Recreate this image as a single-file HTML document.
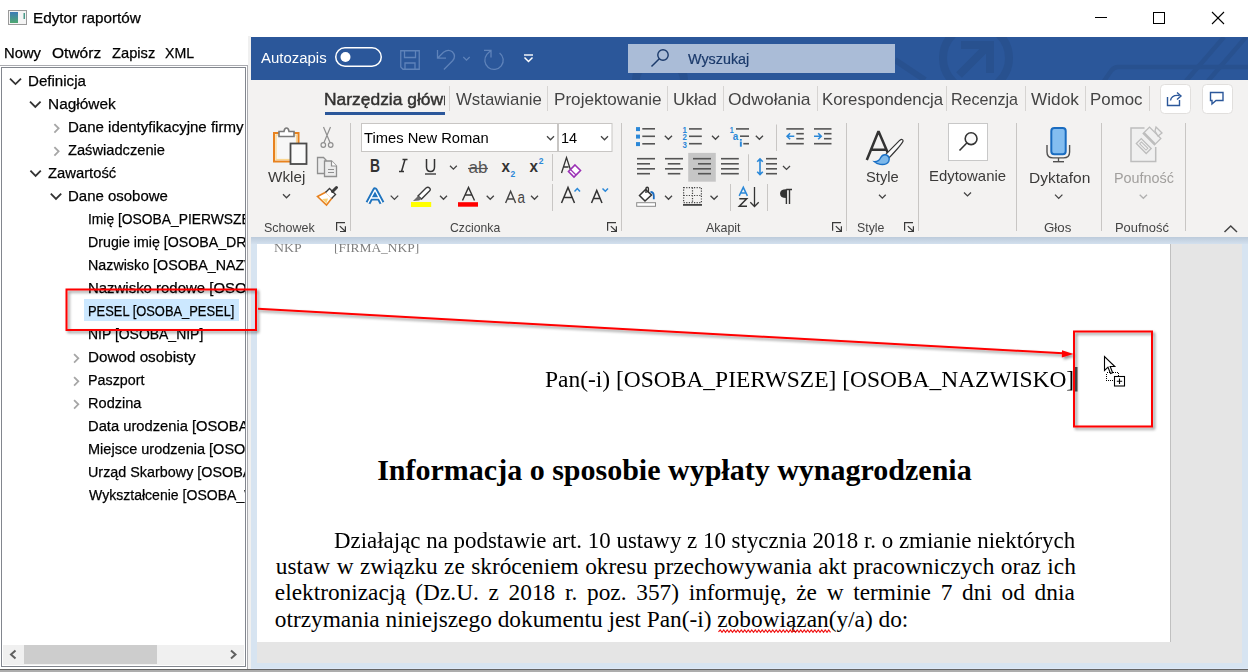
<!DOCTYPE html><html><head><meta charset='utf-8'><style>
*{margin:0;padding:0;box-sizing:border-box}
html,body{width:1248px;height:672px;overflow:hidden;background:#fff;position:relative}
.a{position:absolute}
.t{position:absolute;white-space:pre;line-height:normal}
.just{position:absolute;white-space:nowrap;text-align:justify;text-align-last:justify;font-family:"Liberation Serif",serif;font-size:23.33px;line-height:normal;color:#000}
</style></head><body>
<div class=a style='left:248px;top:36px;width:3px;height:633px;background:#f0f0f0'></div>
<div class=a style='left:251px;top:37px;width:997px;height:43px;background:#2b579a'></div>
<div class=a style='left:248px;top:80px;width:1000px;height:157px;background:#f3f2f1'></div>
<div class=a style='left:251px;top:237px;width:997px;height:432px;background:#d7e4f1'></div>
<div class=a style='left:251px;top:237px;width:997px;height:7px;background:linear-gradient(#bccbdb,#d3e0ee)'></div>
<div class=a style='left:257px;top:244px;width:985px;height:419px;background:#e5e5e5'></div>
<div class=a style='left:257px;top:244px;width:913px;height:398px;background:#fff'></div>
<div class=a style='left:1170px;top:244px;width:1px;height:398px;background:#c0c0c0'></div>
<div class=a style='left:251px;top:668px;width:997px;height:1px;background:#dde8f8'></div>
<div class=a style='left:0;top:669px;width:1248px;height:1px;background:#646464'></div>
<div class=a style='left:0;top:670px;width:1248px;height:2px;background:#adadad'></div>
<div class=a style='left:0;top:65px;width:248px;height:604px;border-top:1px solid #aaabb0;border-right:1px solid #aaabb0'></div>
<div class=a style='left:1px;top:67px;width:245px;height:600px;border:1px solid #82868e;background:#fff'></div>
<div class=a style='left:84px;top:299px;width:155px;height:22px;background:#cce8ff'></div>
<div class=a style='left:3px;top:645px;width:241px;height:20px;background:#f0f0f0'></div>
<div class=a style='left:24px;top:645px;width:133px;height:19px;background:#cdcdcd'></div>
<svg class=a style='left:0;top:0' width='1248' height='672' viewBox='0 0 1248 672'><rect x='8.5' y='10.5' width='18' height='14' fill='#f4f4f4' stroke='#9a9a9a' stroke-width='1' rx='0' /><defs><linearGradient id='gi' x1='0' y1='0' x2='0' y2='1'><stop offset='0' stop-color='#3d7bb8'/><stop offset='1' stop-color='#4ea870'/></linearGradient><linearGradient id='dg' x1='0' y1='0' x2='0' y2='1'><stop offset='0' stop-color='#bccbdb'/><stop offset='1' stop-color='#d3e0ee'/></linearGradient></defs><rect x='10' y='12' width='8' height='11' fill='url(#gi)' stroke='none' stroke-width='1' rx='0' /><rect x='23.5' y='13' width='1.5' height='6' fill='#4a9a8a' stroke='none' stroke-width='1' rx='0' /><line x1='1095' y1='17.5' x2='1107' y2='17.5' stroke='#000' stroke-width='1'/><rect x='1153.5' y='12.5' width='11' height='11' fill='none' stroke='#000' stroke-width='1' rx='0' /><line x1='1212' y1='12' x2='1224' y2='24' stroke='#000' stroke-width='1.1'/><line x1='1224' y1='12' x2='1212' y2='24' stroke='#000' stroke-width='1.1'/><clipPath id='tb'><rect x='251' y='37' width='997' height='43'/></clipPath><g clip-path='url(#tb)'><circle cx='976' cy='58' r='33' fill='none' stroke='#28518f' stroke-width='8'/><path d='M959,75 L987,47 M961,45 H990 V73' fill='none' stroke='#28518f' stroke-width='8'/><path d='M895,60 L925,80' stroke='#28518f' stroke-width='6'/><path d='M1248,67 L1118,67 Q1114,67 1111,71 L1104,81' fill='none' stroke='#28518f' stroke-width='4.5'/><path d='M1186,81 L1224,37 M1208,81 L1246,37' fill='none' stroke='#28518f' stroke-width='4.5'/><path d='M636,80 A24,20 0 0 1 684,80' fill='none' stroke='#28518f' stroke-width='8'/></g><rect x='335.75' y='47.75' width='45.5' height='18.5' fill='none' stroke='#fff' stroke-width='1.5' rx='9.25' /><circle cx='345.5' cy='57' r='5' fill='#fff'/><path d='M400.75,50.75 H419.25 V69.25 H403 L400.75,67 Z' fill='none' stroke='#5f83ba' stroke-width='1.3'/><path d='M404.5,50.75 V57.5 H415.5 V50.75 M405,69.25 V63 H415 V69.25' fill='none' stroke='#5f83ba' stroke-width='1.3'/><path d='M437.5,50 V58.2 H446 M437.5,58.2 L443.5,52.2 Q448.3,48.6 452.3,51.8 Q456.6,56.2 452.6,60.8 L443.9,69.5' fill='none' stroke='#5f83ba' stroke-width='1.3'/><path d='M463.3,57 L466.5,60.2 L469.7,57' fill='none' stroke='#5f83ba' stroke-width='1.2'/><path d='M484,50.3 H491 V57.6 M491,50.3 L486.9,54.4 A9.2,9.2 0 1 0 499.6,52.9' fill='none' stroke='#5f83ba' stroke-width='1.3'/><line x1='524' y1='55' x2='533' y2='55' stroke='#fff' stroke-width='1.4'/><path d='M524.5,57.5 L528.5,61.5 L532.5,57.5' fill='none' stroke='#fff' stroke-width='1.5'/><rect x='628' y='44' width='267' height='29' fill='#aabcd7' stroke='none' stroke-width='1' rx='0' /><circle cx='663' cy='55' r='5.2' fill='none' stroke='#1b3a6b' stroke-width='1.4'/><line x1='659.3' y1='58.7' x2='651.5' y2='66.5' stroke='#1b3a6b' stroke-width='1.5'/><rect x='325' y='112' width='120' height='3' fill='#2b579a' stroke='none' stroke-width='1' rx='0' /><line x1='449.5' y1='86' x2='449.5' y2='111' stroke='#d6d4d2' stroke-width='1'/><line x1='547.5' y1='86' x2='547.5' y2='111' stroke='#d6d4d2' stroke-width='1'/><line x1='667.5' y1='86' x2='667.5' y2='111' stroke='#d6d4d2' stroke-width='1'/><line x1='723.5' y1='86' x2='723.5' y2='111' stroke='#d6d4d2' stroke-width='1'/><line x1='817.5' y1='86' x2='817.5' y2='111' stroke='#d6d4d2' stroke-width='1'/><line x1='946.5' y1='86' x2='946.5' y2='111' stroke='#d6d4d2' stroke-width='1'/><line x1='1025.5' y1='86' x2='1025.5' y2='111' stroke='#d6d4d2' stroke-width='1'/><line x1='1085.5' y1='86' x2='1085.5' y2='111' stroke='#d6d4d2' stroke-width='1'/><line x1='1149.5' y1='86' x2='1149.5' y2='111' stroke='#d6d4d2' stroke-width='1'/><rect x='1160.5' y='84.5' width='30' height='29' fill='#fff' stroke='#e1dfdd' stroke-width='1' rx='4' /><rect x='1202.5' y='84.5' width='30' height='29' fill='#fff' stroke='#e1dfdd' stroke-width='1' rx='4' /><path d='M1167.5,97 V105.5 H1179.5 V100' fill='none' stroke='#2b579a' stroke-width='1.4'/><path d='M1170.5,100.5 Q1171.5,94.5 1179.5,95.5' fill='none' stroke='#2b579a' stroke-width='1.4'/><path d='M1177,92.5 L1181,96 L1177,99.5' fill='none' stroke='#2b579a' stroke-width='1.4'/><path d='M1210.5,92.5 H1223 V100.5 H1216 L1212,104 V100.5 H1210.5 Z' fill='none' stroke='#2b579a' stroke-width='1.4'/><line x1='350.5' y1='123' x2='350.5' y2='231' stroke='#c8c6c4' stroke-width='1'/><line x1='621.5' y1='123' x2='621.5' y2='231' stroke='#c8c6c4' stroke-width='1'/><line x1='846.5' y1='123' x2='846.5' y2='231' stroke='#c8c6c4' stroke-width='1'/><line x1='918.5' y1='123' x2='918.5' y2='231' stroke='#c8c6c4' stroke-width='1'/><line x1='1016.5' y1='123' x2='1016.5' y2='231' stroke='#c8c6c4' stroke-width='1'/><line x1='1101.5' y1='123' x2='1101.5' y2='231' stroke='#c8c6c4' stroke-width='1'/><line x1='1185.5' y1='123' x2='1185.5' y2='231' stroke='#c8c6c4' stroke-width='1'/><path d='M336.6,230.8 V222.6 H345' fill='none' stroke='#3a3a3a' stroke-width='1.2'/><path d='M339.8,226.1 L345.2,231.3 M345.4,226.3 V231.5 H340' fill='none' stroke='#3a3a3a' stroke-width='1.2'/><path d='M607.6,230.8 V222.6 H616' fill='none' stroke='#3a3a3a' stroke-width='1.2'/><path d='M610.8,226.1 L616.2,231.3 M616.4,226.3 V231.5 H611' fill='none' stroke='#3a3a3a' stroke-width='1.2'/><path d='M832.6,230.8 V222.6 H841' fill='none' stroke='#3a3a3a' stroke-width='1.2'/><path d='M835.8,226.1 L841.2,231.3 M841.4,226.3 V231.5 H836' fill='none' stroke='#3a3a3a' stroke-width='1.2'/><path d='M904.6,230.8 V222.6 H913' fill='none' stroke='#3a3a3a' stroke-width='1.2'/><path d='M907.8,226.1 L913.2,231.3 M913.4,226.3 V231.5 H908' fill='none' stroke='#3a3a3a' stroke-width='1.2'/><path d='M1224.5,232 L1230.75,226 L1237,232' fill='none' stroke='#444' stroke-width='1.5'/><rect x='274' y='133' width='24.5' height='28.5' fill='#f7f7f7' stroke='#e8821e' stroke-width='2' rx='0' /><rect x='276' y='135' width='20.5' height='24.5' fill='none' stroke='#fbd68f' stroke-width='1.2' rx='0' /><path d='M279,131.5 H284 Q284.5,128 286.5,128 Q288.5,128 289,131.5 H294 V136.5 H279 Z' fill='#fff' stroke='#7a7a7a' stroke-width='1.6'/><rect x='290.5' y='143.5' width='16' height='20.5' fill='#fafafa' stroke='#4a4a4a' stroke-width='1.8' rx='0' /><path d='M283,194.25 L286.50,197.75 L290,194.25' fill='none' stroke='#444' stroke-width='1.3'/><path d='M323.5,127 L330,142.5 M330.5,127 L324,142.5' fill='none' stroke='#8f8f8f' stroke-width='1.2'/><circle cx='323.3' cy='145' r='2.3' fill='none' stroke='#8f8f8f' stroke-width='1.2'/><circle cx='330.7' cy='145' r='2.3' fill='none' stroke='#8f8f8f' stroke-width='1.2'/><path d='M317.5,157.5 H323.5 L326,160 V173.5 H317.5 Z' fill='#ececec' stroke='#8f8f8f' stroke-width='1.3'/><path d='M324.5,161 H331.5 L336.5,166 V176.5 H324.5 Z' fill='#ececec' stroke='#8f8f8f' stroke-width='1.3'/><path d='M331.5,161 V166 H336.5' fill='#fff' stroke='#8f8f8f' stroke-width='1.2'/><line x1='328' y1='169.5' x2='334' y2='169.5' stroke='#8f8f8f' stroke-width='1'/><line x1='328' y1='172.5' x2='334' y2='172.5' stroke='#8f8f8f' stroke-width='1'/><path d='M317.5,196.5 L326,192 L332,198 L326.5,205 Z' fill='#fff' stroke='#e8821e' stroke-width='1.6'/><path d='M322,199 L328,198.5 L326.5,203.5 Z' fill='#f9d37c'/><path d='M325.5,192.5 L329.5,188.5 L335.5,194.5 L331.5,198.5' fill='#fff' stroke='#3a3a3a' stroke-width='1.4'/><path d='M332.5,191.5 L336.5,187.5' stroke='#3a3a3a' stroke-width='3' stroke-linecap='round'/><rect x='361.5' y='123.5' width='196' height='28' fill='#fff' stroke='#c8c6c4' stroke-width='1' rx='0' /><rect x='558.5' y='123.5' width='53.5' height='28' fill='#fff' stroke='#c8c6c4' stroke-width='1' rx='0' /><path d='M547,136.25 L550.50,139.75 L554,136.25' fill='none' stroke='#444' stroke-width='1.3'/><path d='M601,136.25 L604.50,139.75 L608,136.25' fill='none' stroke='#444' stroke-width='1.3'/><text x='370' y='172' font-family='Liberation Sans' font-size='17.5' font-weight='700' fill='#333' text-anchor='start' style='' textLength='10' lengthAdjust='spacingAndGlyphs'>B</text><path d='M402.5,159.5 H407.5 M399,171.5 H404 M405,159.5 L401.5,171.5' fill='none' stroke='#333' stroke-width='1.5'/><path d='M426.5,159 V167 Q426.5,171.5 430.5,171.5 Q434.5,171.5 434.5,167 V159' fill='none' stroke='#333' stroke-width='1.5'/><rect x='425' y='173.2' width='11' height='1.6' fill='#555' stroke='none' stroke-width='1' rx='0' /><path d='M450,165.80 L453.40,169.20 L456.8,165.80' fill='none' stroke='#444' stroke-width='1.3'/><text x='468.5' y='173' font-family='Liberation Sans' font-size='16' font-weight='400' fill='#555' text-anchor='start' style='' textLength='19' lengthAdjust='spacingAndGlyphs'>ab</text><line x1='468' y1='168.5' x2='488' y2='168.5' stroke='#555' stroke-width='1.2'/><text x='501.5' y='172' font-family='Liberation Sans' font-size='16.5' font-weight='700' fill='#333' text-anchor='start' style='' textLength='8.5' lengthAdjust='spacingAndGlyphs'>x</text><text x='510.5' y='177' font-family='Liberation Sans' font-size='8.5' font-weight='700' fill='#2b88d8' text-anchor='start' style='' >2</text><text x='529.5' y='172' font-family='Liberation Sans' font-size='16.5' font-weight='700' fill='#333' text-anchor='start' style='' textLength='8.5' lengthAdjust='spacingAndGlyphs'>x</text><text x='538.8' y='163.5' font-family='Liberation Sans' font-size='8.5' font-weight='700' fill='#2b88d8' text-anchor='start' style='' >2</text><line x1='552.5' y1='154' x2='552.5' y2='181' stroke='#c8c6c4' stroke-width='1'/><line x1='552.5' y1='184' x2='552.5' y2='211' stroke='#c8c6c4' stroke-width='1'/><path d='M561.5,173 L566.5,157.5 L571.5,173 M563.5,167 H568.5' fill='none' stroke='#333' stroke-width='1.3'/><path d='M575,165 L580.5,170.5 L574,177 L568.5,171.5 Z' fill='#fff' stroke='#9b30b5' stroke-width='1.6'/><path d='M570.5,169.5 L576,175' stroke='#9b30b5' stroke-width='1.2'/><path d='M368,203 L375,190 L382,203 M370.6,198 H379.4' fill='none' stroke='#1e73be' stroke-width='5.2' stroke-linejoin='round'/><path d='M368,203 L375,190 L382,203 M370.6,198 H379.4' fill='none' stroke='#ffffff' stroke-width='1.5' stroke-linejoin='round'/><path d='M390.7,195.62 L394.45,199.38 L398.2,195.62' fill='none' stroke='#444' stroke-width='1.3'/><path d='M418,196 L426,188 Q428,186.5 429.5,188 Q431,189.5 429.5,191 L421.5,199 Z' fill='#fff' stroke='#3a3a3a' stroke-width='1.4'/><path d='M418,196 L421.5,199 L419,200.5 L413,201 Z' fill='#6a6a6a'/><rect x='411' y='202' width='20.2' height='5' fill='#ffff00' stroke='none' stroke-width='1' rx='0' /><path d='M440,195.75 L443.50,199.25 L447,195.75' fill='none' stroke='#444' stroke-width='1.3'/><path d='M462.5,200.5 L468.5,187.5 L474.5,200.5 M465,195 H472' fill='none' stroke='#333' stroke-width='1.4'/><rect x='458' y='202.2' width='20' height='4.5' fill='#ff0000' stroke='none' stroke-width='1' rx='0' /><path d='M486.7,195.72 L490.25,199.28 L493.8,195.72' fill='none' stroke='#444' stroke-width='1.3'/><path d='M505.6,203 L510.6,191.2 L515.6,203 M507.3,199 H513.9' fill='none' stroke='#444' stroke-width='1.4'/><text x='517.6' y='203' font-family='Liberation Sans' font-size='16' font-weight='400' fill='#444' text-anchor='start' style='' textLength='7.5' lengthAdjust='spacingAndGlyphs'>a</text><path d='M531,195.75 L534.50,199.25 L538,195.75' fill='none' stroke='#444' stroke-width='1.3'/><path d='M561.5,203 L568,187.5 L574.5,203 M564,197.5 H572' fill='none' stroke='#333' stroke-width='1.5'/><path d='M574.5,191.5 L577.3,188.5 L580,191.5' fill='none' stroke='#2b88d8' stroke-width='1.5'/><path d='M591.5,203 L596.75,190.5 L602,203 M593.5,198.5 H600' fill='none' stroke='#333' stroke-width='1.5'/><path d='M602.5,188.5 L605.3,191.3 L608,188.5' fill='none' stroke='#2b88d8' stroke-width='1.5'/><rect x='636' y='127.1' width='4' height='4' fill='#2b88d8' stroke='none' stroke-width='1' rx='0' /><rect x='636' y='134.6' width='4' height='4' fill='#2b88d8' stroke='none' stroke-width='1' rx='0' /><rect x='636' y='142.1' width='4' height='4' fill='#2b88d8' stroke='none' stroke-width='1' rx='0' /><rect x='642.3' y='128.0' width='12.7' height='1.6' fill='#555' stroke='none' stroke-width='1' rx='0' /><rect x='642.3' y='135.5' width='12.7' height='1.6' fill='#555' stroke='none' stroke-width='1' rx='0' /><rect x='642.3' y='143.0' width='12.7' height='1.6' fill='#555' stroke='none' stroke-width='1' rx='0' /><path d='M664.8,135.70 L668.40,139.30 L672,135.70' fill='none' stroke='#444' stroke-width='1.3'/><text x='682.6' y='132.9' font-family='Liberation Sans' font-size='9' font-weight='700' fill='#2b88d8' text-anchor='start' style='' textLength='4.4' lengthAdjust='spacingAndGlyphs'>1</text><rect x='689' y='128.1' width='12.8' height='1.6' fill='#555' stroke='none' stroke-width='1' rx='0' /><text x='682.6' y='140.3' font-family='Liberation Sans' font-size='9' font-weight='700' fill='#2b88d8' text-anchor='start' style='' textLength='4.4' lengthAdjust='spacingAndGlyphs'>2</text><rect x='689' y='135.5' width='12.8' height='1.6' fill='#555' stroke='none' stroke-width='1' rx='0' /><text x='682.6' y='147.7' font-family='Liberation Sans' font-size='9' font-weight='700' fill='#2b88d8' text-anchor='start' style='' textLength='4.4' lengthAdjust='spacingAndGlyphs'>3</text><rect x='689' y='142.89999999999998' width='12.8' height='1.6' fill='#555' stroke='none' stroke-width='1' rx='0' /><path d='M712,135.75 L715.50,139.25 L719,135.75' fill='none' stroke='#444' stroke-width='1.3'/><text x='729.8' y='132.7' font-family='Liberation Sans' font-size='9' font-weight='700' fill='#2b88d8' text-anchor='start' style='' textLength='4' lengthAdjust='spacingAndGlyphs'>1</text><rect x='736' y='128.1' width='13' height='1.6' fill='#555' stroke='none' stroke-width='1' rx='0' /><text x='732.8' y='140.2' font-family='Liberation Sans' font-size='10' font-weight='700' fill='#2b88d8' text-anchor='start' style='' textLength='5.5' lengthAdjust='spacingAndGlyphs'>a</text><rect x='740' y='135.4' width='9' height='1.6' fill='#555' stroke='none' stroke-width='1' rx='0' /><rect x='739.9' y='141.5' width='1.9' height='5.2' fill='#2b88d8' stroke='none' stroke-width='1' rx='0' /><rect x='739.9' y='139' width='1.9' height='1.7' fill='#2b88d8' stroke='none' stroke-width='1' rx='0' /><rect x='743.3' y='142.9' width='5.7' height='1.6' fill='#555' stroke='none' stroke-width='1' rx='0' /><path d='M755.8,135.70 L759.40,139.30 L763,135.70' fill='none' stroke='#444' stroke-width='1.3'/><line x1='776.5' y1='124.5' x2='776.5' y2='151' stroke='#c8c6c4' stroke-width='1'/><rect x='786.3' y='128.1' width='17.5' height='1.6' fill='#555' stroke='none' stroke-width='1' rx='0' /><rect x='786.3' y='142.9' width='17.5' height='1.6' fill='#555' stroke='none' stroke-width='1' rx='0' /><rect x='796.3' y='132.9' width='7.5' height='1.6' fill='#555' stroke='none' stroke-width='1' rx='0' /><rect x='796.3' y='137.9' width='7.5' height='1.6' fill='#555' stroke='none' stroke-width='1' rx='0' /><path d='M794.3,136.3 H787.0999999999999 M790.0999999999999,133.3 L787.0999999999999,136.3 L790.0999999999999,139.3' fill='none' stroke='#2b88d8' stroke-width='1.6'/><rect x='814' y='128.1' width='17.5' height='1.6' fill='#555' stroke='none' stroke-width='1' rx='0' /><rect x='814' y='142.9' width='17.5' height='1.6' fill='#555' stroke='none' stroke-width='1' rx='0' /><rect x='824' y='132.9' width='7.5' height='1.6' fill='#555' stroke='none' stroke-width='1' rx='0' /><rect x='824' y='137.9' width='7.5' height='1.6' fill='#555' stroke='none' stroke-width='1' rx='0' /><path d='M814,136.3 H821.2 M818.2,133.3 L821.2,136.3 L818.2,139.3' fill='none' stroke='#2b88d8' stroke-width='1.6'/><rect x='688.2' y='152.9' width='27.6' height='28.8' fill='#c6c6c6' stroke='none' stroke-width='1' rx='0' /><rect x='637' y='157.89999999999998' width='18' height='1.6' fill='#555' stroke='none' stroke-width='1' rx='0' /><rect x='665' y='157.89999999999998' width='18' height='1.6' fill='#555' stroke='none' stroke-width='1' rx='0' /><rect x='693' y='157.89999999999998' width='18' height='1.6' fill='#555' stroke='none' stroke-width='1' rx='0' /><rect x='721' y='157.89999999999998' width='17.8' height='1.6' fill='#555' stroke='none' stroke-width='1' rx='0' /><rect x='637' y='163.0' width='13' height='1.6' fill='#555' stroke='none' stroke-width='1' rx='0' /><rect x='667.8' y='163.0' width='12.5' height='1.6' fill='#555' stroke='none' stroke-width='1' rx='0' /><rect x='698' y='163.0' width='13' height='1.6' fill='#555' stroke='none' stroke-width='1' rx='0' /><rect x='721' y='163.0' width='17.8' height='1.6' fill='#555' stroke='none' stroke-width='1' rx='0' /><rect x='637' y='168.0' width='18' height='1.6' fill='#555' stroke='none' stroke-width='1' rx='0' /><rect x='665' y='168.0' width='18' height='1.6' fill='#555' stroke='none' stroke-width='1' rx='0' /><rect x='693' y='168.0' width='18' height='1.6' fill='#555' stroke='none' stroke-width='1' rx='0' /><rect x='721' y='168.0' width='17.8' height='1.6' fill='#555' stroke='none' stroke-width='1' rx='0' /><rect x='637' y='172.89999999999998' width='13' height='1.6' fill='#555' stroke='none' stroke-width='1' rx='0' /><rect x='667.8' y='172.89999999999998' width='12.5' height='1.6' fill='#555' stroke='none' stroke-width='1' rx='0' /><rect x='698' y='172.89999999999998' width='13' height='1.6' fill='#555' stroke='none' stroke-width='1' rx='0' /><rect x='721' y='172.89999999999998' width='17.8' height='1.6' fill='#555' stroke='none' stroke-width='1' rx='0' /><line x1='748.5' y1='154.3' x2='748.5' y2='181' stroke='#c8c6c4' stroke-width='1'/><path d='M760,159 V174.5 M757.2,161.8 L760,159 L762.8,161.8 M757.2,171.7 L760,174.5 L762.8,171.7' fill='none' stroke='#2b88d8' stroke-width='1.6'/><rect x='766' y='157.89999999999998' width='11' height='1.6' fill='#555' stroke='none' stroke-width='1' rx='0' /><rect x='766' y='163.0' width='11' height='1.6' fill='#555' stroke='none' stroke-width='1' rx='0' /><rect x='766' y='168.0' width='11' height='1.6' fill='#555' stroke='none' stroke-width='1' rx='0' /><rect x='766' y='172.89999999999998' width='11' height='1.6' fill='#555' stroke='none' stroke-width='1' rx='0' /><path d='M783,165.95 L786.50,169.45 L790,165.95' fill='none' stroke='#444' stroke-width='1.3'/><path d='M639.5,195.5 L645.5,189.5 L651.5,195 L645,201 Z' fill='#fff' stroke='#333' stroke-width='1.5'/><path d='M646,193 V188.5 Q646,187.2 647.2,187.2 Q648.4,187.2 648.4,188.5 V193' fill='none' stroke='#333' stroke-width='1.4'/><path d='M650.5,192 Q653.8,192 653.8,196 V199.3' fill='none' stroke='#1a6cc0' stroke-width='1.8'/><rect x='636.7' y='202.7' width='18.8' height='3.6' fill='#fff' stroke='#8a8a8a' stroke-width='1' rx='0' /><path d='M665,195.75 L668.50,199.25 L672,195.75' fill='none' stroke='#444' stroke-width='1.3'/><g stroke='#444' stroke-width='1.2' stroke-dasharray='1.2 1.4' fill='none'><rect x='683.6' y='187.6' width='17.8' height='15'/><line x1='692.5' y1='187.6' x2='692.5' y2='203'/><line x1='683.6' y1='195.5' x2='701.4' y2='195.5'/></g><rect x='683' y='204' width='19' height='1.8' fill='#444' stroke='none' stroke-width='1' rx='0' /><path d='M710.5,195.70 L714.10,199.30 L717.7,195.70' fill='none' stroke='#444' stroke-width='1.3'/><line x1='730.5' y1='184' x2='730.5' y2='211' stroke='#c8c6c4' stroke-width='1'/><path d='M739.2,195.8 L743.3,187.3 L747.4,195.8 M740.6,193 H746' fill='none' stroke='#2b88d8' stroke-width='1.5'/><path d='M739.3,198.7 H746.7 L739.3,206.3 H747' fill='none' stroke='#333' stroke-width='1.5'/><path d='M754.5,187 V206.5 M750.3,202.2 L754.5,206.5 L758.7,202.2' fill='none' stroke='#333' stroke-width='1.3'/><line x1='767.5' y1='184' x2='767.5' y2='211' stroke='#c8c6c4' stroke-width='1'/><path d='M786.2,189.5 H792 M786.4,189.5 V204 M789.5,189.5 V204' fill='none' stroke='#333' stroke-width='1.4'/><path d='M786.4,189.2 Q780,189.2 780,193.5 Q780,198 786.4,198 Z' fill='#333'/><path d='M866.8,160 L878.5,131.2 L888.3,154 M871.8,149.8 H886.8' fill='none' stroke='#333' stroke-width='2.5' stroke-linejoin='bevel'/><path d='M885.3,154.8 L899.6,140.4 Q902.6,138.3 903.1,140.9 Q902.9,143.3 889.3,157.6 Z' fill='#fafafa' stroke='#333' stroke-width='1.2'/><path d='M874.2,161.6 Q879,161.8 880.6,157.8 Q882.6,153.8 886.6,155 Q890.2,156.8 888.8,161.2 Q886.8,165.2 880.2,164.4 Q876.6,163.8 874.2,161.6 Z' fill='#7db8ea' stroke='#1a6fc4' stroke-width='1.4'/><path d='M879,194.82 L882.35,198.18 L885.7,194.82' fill='none' stroke='#444' stroke-width='1.3'/><rect x='948.5' y='123.5' width='39' height='37' fill='#fff' stroke='#c8c8c8' stroke-width='1' rx='0' /><circle cx='971.1' cy='138.7' r='5.9' fill='#fafafa' stroke='#333' stroke-width='1.6'/><line x1='966.8' y1='143' x2='959.5' y2='150.5' stroke='#333' stroke-width='1.6'/><path d='M964,192.45 L967.50,195.95 L971,192.45' fill='none' stroke='#444' stroke-width='1.3'/><rect x='1051.3' y='128.1' width='14.4' height='26.2' fill='#83bdf0' stroke='#1a6cc0' stroke-width='2' rx='3' /><path d='M1047,145 V152 Q1047,157.9 1053,157.9 H1063.6 Q1069.6,157.9 1069.6,152 V145' fill='none' stroke='#505050' stroke-width='1.4'/><line x1='1058.5' y1='158' x2='1058.5' y2='161.5' stroke='#505050' stroke-width='1.3'/><line x1='1053' y1='161.7' x2='1064' y2='161.7' stroke='#505050' stroke-width='1.4'/><path d='M1055,194.65 L1058.70,198.35 L1062.4,194.65' fill='none' stroke='#444' stroke-width='1.3'/><path d='M1144.5,128 H1131 V161.5 H1155.7 V147' fill='#f0f0f0' stroke='#bdbdbd' stroke-width='1.5'/><g transform='translate(1139.5,141.8) rotate(45)'><rect x='-1' y='-3.5' width='14' height='7' fill='#f0f0f0' stroke='#bdbdbd' stroke-width='1.3'/><rect x='1.5' y='-1.3' width='9' height='2.6' fill='none' stroke='#bdbdbd' stroke-width='1'/></g><g transform='translate(1152,136) rotate(45)'><rect x='-8' y='-4.5' width='16' height='9' fill='#f0f0f0' stroke='#bdbdbd' stroke-width='1.3'/><rect x='-8' y='2.5' width='16' height='2' fill='#bdbdbd'/></g><path d='M1156,127 L1162,133 L1158,136 L1155,131 Z' fill='#f0f0f0' stroke='#bdbdbd' stroke-width='1.3'/><path d='M1139.7,194.68 L1143.35,198.32 L1147,194.68' fill='none' stroke='#b0b0b0' stroke-width='1.3'/><path d='M10,78.55 L15.50,84.05 L21,78.55' fill='none' stroke='#333' stroke-width='1.8'/><path d='M30,101.65 L35.30,106.95 L40.6,101.65' fill='none' stroke='#333' stroke-width='1.8'/><path d='M30.4,170.70 L35.60,175.90 L40.8,170.70' fill='none' stroke='#333' stroke-width='1.8'/><path d='M50.8,193.70 L56.00,198.90 L61.2,193.70' fill='none' stroke='#333' stroke-width='1.8'/><path d='M54.38,124.05 L58.62,128.30 L54.38,132.55' fill='none' stroke='#a6a6a6' stroke-width='1.8'/><path d='M54.38,147.05 L58.62,151.30 L54.38,155.55' fill='none' stroke='#a6a6a6' stroke-width='1.8'/><path d='M74.08,354.05 L78.33,358.30 L74.08,362.55' fill='none' stroke='#a6a6a6' stroke-width='1.8'/><path d='M74.08,377.05 L78.33,381.30 L74.08,385.55' fill='none' stroke='#a6a6a6' stroke-width='1.8'/><path d='M74.08,400.05 L78.33,404.30 L74.08,408.55' fill='none' stroke='#a6a6a6' stroke-width='1.8'/><path d='M15.5,650.5 L11,654.5 L15.5,658.5' fill='none' stroke='#606060' stroke-width='2'/><path d='M231,650.5 L235.5,654.5 L231,658.5' fill='none' stroke='#606060' stroke-width='2'/></svg>
<div class=a style='left:0;top:0;width:245px;height:667px;overflow:hidden'><div class=t style='left:28.03px;top:71.60px;font-family:"Liberation Sans", sans-serif;font-size:15.5px;font-weight:400;color:#000;transform:scaleX(0.9746);transform-origin:0 0;-webkit-text-stroke:0.25px #000;'>Definicja</div>
<div class=t style='left:48.01px;top:94.60px;font-family:"Liberation Sans", sans-serif;font-size:15.5px;font-weight:400;color:#000;transform:scaleX(0.9940);transform-origin:0 0;-webkit-text-stroke:0.25px #000;'>Nagłówek</div>
<div class=t style='left:68.03px;top:117.60px;font-family:"Liberation Sans", sans-serif;font-size:15.5px;font-weight:400;color:#000;transform:scaleX(0.9700);transform-origin:0 0;-webkit-text-stroke:0.25px #000;'>Dane identyfikacyjne firmy</div>
<div class=t style='left:68.00px;top:140.60px;font-family:"Liberation Sans", sans-serif;font-size:15.5px;font-weight:400;color:#000;transform:scaleX(0.9461);transform-origin:0 0;-webkit-text-stroke:0.25px #000;'>Zaświadczenie</div>
<div class=t style='left:48.00px;top:163.60px;font-family:"Liberation Sans", sans-serif;font-size:15.5px;font-weight:400;color:#000;transform:scaleX(0.9549);transform-origin:0 0;-webkit-text-stroke:0.25px #000;'>Zawartość</div>
<div class=t style='left:68.03px;top:186.60px;font-family:"Liberation Sans", sans-serif;font-size:15.5px;font-weight:400;color:#000;transform:scaleX(0.9657);transform-origin:0 0;-webkit-text-stroke:0.25px #000;'>Dane osobowe</div>
<div class=t style='left:87.86px;top:209.60px;font-family:"Liberation Sans", sans-serif;font-size:15.5px;font-weight:400;color:#000;transform:scaleX(0.8927);transform-origin:0 0;-webkit-text-stroke:0.25px #000;'>Imię [OSOBA_PIERWSZE]</div>
<div class=t style='left:87.83px;top:232.60px;font-family:"Liberation Sans", sans-serif;font-size:15.5px;font-weight:400;color:#000;transform:scaleX(0.9159);transform-origin:0 0;-webkit-text-stroke:0.25px #000;'>Drugie imię [OSOBA_DRUGIE]</div>
<div class=t style='left:87.83px;top:255.60px;font-family:"Liberation Sans", sans-serif;font-size:15.5px;font-weight:400;color:#000;transform:scaleX(0.9211);transform-origin:0 0;-webkit-text-stroke:0.25px #000;'>Nazwisko [OSOBA_NAZWISKO]</div>
<div class=t style='left:87.79px;top:278.60px;font-family:"Liberation Sans", sans-serif;font-size:15.5px;font-weight:400;color:#000;transform:scaleX(0.9639);transform-origin:0 0;-webkit-text-stroke:0.25px #000;'>Nazwisko rodowe [OSOBA_NAZWISKO_RODOWE]</div>
<div class=t style='left:87.97px;top:301.60px;font-family:"Liberation Sans", sans-serif;font-size:15.5px;font-weight:400;color:#000;transform:scaleX(0.8316);transform-origin:0 0;-webkit-text-stroke:0.25px #000;'>PESEL [OSOBA_PESEL]</div>
<div class=t style='left:87.70px;top:324.60px;font-family:"Liberation Sans", sans-serif;font-size:15.5px;font-weight:400;color:#000;transform:scaleX(0.9000);transform-origin:0 0;-webkit-text-stroke:0.25px #000;'>NIP [OSOBA_NIP]</div>
<div class=t style='left:87.62px;top:347.60px;font-family:"Liberation Sans", sans-serif;font-size:15.5px;font-weight:400;color:#000;transform:scaleX(0.9826);transform-origin:0 0;-webkit-text-stroke:0.25px #000;'>Dowod osobisty</div>
<div class=t style='left:87.68px;top:370.60px;font-family:"Liberation Sans", sans-serif;font-size:15.5px;font-weight:400;color:#000;transform:scaleX(0.9233);transform-origin:0 0;-webkit-text-stroke:0.25px #000;'>Paszport</div>
<div class=t style='left:87.66px;top:393.60px;font-family:"Liberation Sans", sans-serif;font-size:15.5px;font-weight:400;color:#000;transform:scaleX(0.9402);transform-origin:0 0;-webkit-text-stroke:0.25px #000;'>Rodzina</div>
<div class=t style='left:87.65px;top:416.60px;font-family:"Liberation Sans", sans-serif;font-size:15.5px;font-weight:400;color:#000;transform:scaleX(0.9503);transform-origin:0 0;-webkit-text-stroke:0.25px #000;'>Data urodzenia [OSOBA_DATA_URODZENIA]</div>
<div class=t style='left:87.66px;top:439.60px;font-family:"Liberation Sans", sans-serif;font-size:15.5px;font-weight:400;color:#000;transform:scaleX(0.9370);transform-origin:0 0;-webkit-text-stroke:0.25px #000;'>Miejsce urodzenia [OSOBA_MIEJSCE_URODZENIA]</div>
<div class=t style='left:87.67px;top:462.60px;font-family:"Liberation Sans", sans-serif;font-size:15.5px;font-weight:400;color:#000;transform:scaleX(0.9261);transform-origin:0 0;-webkit-text-stroke:0.25px #000;'>Urząd Skarbowy [OSOBA_URZAD_SKARBOWY]</div>
<div class=t style='left:88.60px;top:485.60px;font-family:"Liberation Sans", sans-serif;font-size:15.5px;font-weight:400;color:#000;transform:scaleX(0.9067);transform-origin:0 0;-webkit-text-stroke:0.25px #000;'>Wykształcenie [OSOBA_WYKSZTALCENIE]</div></div>
<div class=t style='left:32.68px;top:9.40px;font-family:"Liberation Sans", sans-serif;font-size:15px;font-weight:400;color:#000;transform:scaleX(1.0181);transform-origin:0 0;-webkit-text-stroke:0.25px #000;'>Edytor raportów</div>
<div class=t style='left:3.81px;top:43.60px;font-family:"Liberation Sans", sans-serif;font-size:15px;font-weight:400;color:#000;transform:scaleX(0.9865);transform-origin:0 0;-webkit-text-stroke:0.25px #000;'>Nowy</div>
<div class=t style='left:52.37px;top:43.60px;font-family:"Liberation Sans", sans-serif;font-size:15px;font-weight:400;color:#000;transform:scaleX(1.0348);transform-origin:0 0;-webkit-text-stroke:0.25px #000;'>Otwórz</div>
<div class=t style='left:111.90px;top:43.60px;font-family:"Liberation Sans", sans-serif;font-size:15px;font-weight:400;color:#000;transform:scaleX(0.9795);transform-origin:0 0;-webkit-text-stroke:0.25px #000;'>Zapisz</div>
<div class=t style='left:164.96px;top:43.60px;font-family:"Liberation Sans", sans-serif;font-size:15px;font-weight:400;color:#000;transform:scaleX(0.9433);transform-origin:0 0;-webkit-text-stroke:0.25px #000;'>XML</div>
<div class=t style='left:261.00px;top:48.60px;font-family:"Liberation Sans", sans-serif;font-size:15.5px;font-weight:400;color:#fff;transform:scaleX(0.9647);transform-origin:0 0;'>Autozapis</div>
<div class=t style='left:688.00px;top:51.00px;font-family:"Liberation Sans", sans-serif;font-size:14px;font-weight:400;color:#1b3a6b;transform:scaleX(1.0254);transform-origin:0 0;-webkit-text-stroke:0.2px #1b3a6b;'>Wyszukaj</div>
<div class=t style='left:455.60px;top:89.80px;font-family:"Liberation Sans", sans-serif;font-size:17px;font-weight:400;color:#444;transform:scaleX(0.9872);transform-origin:0 0;'>Wstawianie</div>
<div class=t style='left:553.69px;top:89.80px;font-family:"Liberation Sans", sans-serif;font-size:17px;font-weight:400;color:#444;transform:scaleX(1.0067);transform-origin:0 0;'>Projektowanie</div>
<div class=t style='left:672.59px;top:89.80px;font-family:"Liberation Sans", sans-serif;font-size:17px;font-weight:400;color:#444;transform:scaleX(1.0095);transform-origin:0 0;'>Układ</div>
<div class=t style='left:728.17px;top:89.80px;font-family:"Liberation Sans", sans-serif;font-size:17px;font-weight:400;color:#444;transform:scaleX(1.0278);transform-origin:0 0;'>Odwołania</div>
<div class=t style='left:821.51px;top:89.80px;font-family:"Liberation Sans", sans-serif;font-size:17px;font-weight:400;color:#444;transform:scaleX(0.9852);transform-origin:0 0;'>Korespondencja</div>
<div class=t style='left:951.35px;top:89.80px;font-family:"Liberation Sans", sans-serif;font-size:17px;font-weight:400;color:#444;transform:scaleX(0.9457);transform-origin:0 0;'>Recenzja</div>
<div class=t style='left:1031.30px;top:89.80px;font-family:"Liberation Sans", sans-serif;font-size:17px;font-weight:400;color:#444;transform:scaleX(1.0149);transform-origin:0 0;'>Widok</div>
<div class=t style='left:1090.31px;top:89.80px;font-family:"Liberation Sans", sans-serif;font-size:17px;font-weight:400;color:#444;transform:scaleX(0.9923);transform-origin:0 0;'>Pomoc</div>
<div class=t style='left:268.00px;top:168.40px;font-family:"Liberation Sans", sans-serif;font-size:15px;font-weight:400;color:#3b3a39;transform:scaleX(1.0167);transform-origin:0 0;'>Wklej</div>
<div class=t style='left:264.07px;top:219.50px;font-family:"Liberation Sans", sans-serif;font-size:13.5px;font-weight:400;color:#444;transform:scaleX(0.9259);transform-origin:0 0;'>Schowek</div>
<div class=t style='left:364.00px;top:128.50px;font-family:"Liberation Sans", sans-serif;font-size:15.5px;font-weight:400;color:#000;transform:scaleX(0.9500);transform-origin:0 0;'>Times New Roman</div>
<div class=t style='left:561.06px;top:128.50px;font-family:"Liberation Sans", sans-serif;font-size:15.5px;font-weight:400;color:#000;transform:scaleX(0.9375);transform-origin:0 0;'>14</div>
<div class=t style='left:449.90px;top:219.50px;font-family:"Liberation Sans", sans-serif;font-size:13.5px;font-weight:400;color:#444;transform:scaleX(0.9036);transform-origin:0 0;'>Czcionka</div>
<div class=t style='left:705.50px;top:219.50px;font-family:"Liberation Sans", sans-serif;font-size:13.5px;font-weight:400;color:#444;transform:scaleX(0.9211);transform-origin:0 0;'>Akapit</div>
<div class=t style='left:866.02px;top:168.40px;font-family:"Liberation Sans", sans-serif;font-size:15px;font-weight:400;color:#3b3a39;transform:scaleX(0.9812);transform-origin:0 0;'>Style</div>
<div class=t style='left:857.09px;top:219.50px;font-family:"Liberation Sans", sans-serif;font-size:13.5px;font-weight:400;color:#444;transform:scaleX(0.9138);transform-origin:0 0;'>Style</div>
<div class=t style='left:929.01px;top:166.60px;font-family:"Liberation Sans", sans-serif;font-size:15px;font-weight:400;color:#3b3a39;transform:scaleX(0.9934);transform-origin:0 0;'>Edytowanie</div>
<div class=t style='left:1028.56px;top:168.80px;font-family:"Liberation Sans", sans-serif;font-size:15px;font-weight:400;color:#3b3a39;transform:scaleX(1.0351);transform-origin:0 0;'>Dyktafon</div>
<div class=t style='left:1113.54px;top:168.80px;font-family:"Liberation Sans", sans-serif;font-size:15px;font-weight:400;color:#a19f9d;transform:scaleX(0.9590);transform-origin:0 0;'>Poufność</div>
<div class=t style='left:1044.02px;top:219.50px;font-family:"Liberation Sans", sans-serif;font-size:13.5px;font-weight:400;color:#444;transform:scaleX(0.9846);transform-origin:0 0;'>Głos</div>
<div class=t style='left:1115.44px;top:219.50px;font-family:"Liberation Sans", sans-serif;font-size:13.5px;font-weight:400;color:#444;transform:scaleX(0.9564);transform-origin:0 0;'>Poufność</div>
<div class=a style='left:0;top:0;width:445px;height:118px;overflow:hidden'><div class=t style='left:323.98px;top:89.80px;font-family:"Liberation Sans", sans-serif;font-size:17px;font-weight:400;color:#323130;transform:scaleX(1.0243);transform-origin:0 0;-webkit-text-stroke:0.45px #323130;'>Narzędzia główna</div></div>
<div class=a style='left:0;top:0;width:1248px;height:672px;clip-path:inset(244px 78px 30px 257px)'><div class=t style='left:273.96px;top:239.60px;font-family:"Liberation Serif", serif;font-size:13.3px;font-weight:400;color:#7f7f7f;transform:scaleX(1.0400);transform-origin:0 0;'>NKP</div>
<div class=t style='left:333.99px;top:239.60px;font-family:"Liberation Serif", serif;font-size:13.3px;font-weight:400;color:#7f7f7f;transform:scaleX(1.0122);transform-origin:0 0;'>[FIRMA_NKP]</div>
<div class=t style='left:544.99px;top:366.00px;font-family:"Liberation Serif", serif;font-size:23.33px;font-weight:400;color:#000;transform:scaleX(1.0057);transform-origin:0 0;'>Pan(-i) [OSOBA_PIERWSZE] [OSOBA_NAZWISKO]</div>
<div class=t style='left:377.20px;top:452.70px;font-family:"Liberation Serif", serif;font-size:30px;font-weight:700;color:#000;'>Informacja o sposobie wypłaty wynagrodzenia</div>
<div class=t style='left:333.77px;top:526.70px;font-family:"Liberation Serif", serif;font-size:23.33px;font-weight:400;color:#000;transform:scaleX(0.9821);transform-origin:0 0;'>Działając na podstawie art. 10 ustawy z 10 stycznia 2018 r. o zmianie niektórych</div>
<div class=t style='left:275.80px;top:553.10px;font-family:"Liberation Serif", serif;font-size:23.33px;font-weight:400;color:#000;white-space:nowrap;text-align:justify;text-align-last:justify;width:800px;'>ustaw w związku ze skróceniem okresu przechowywania akt pracowniczych oraz ich</div>
<div class=t style='left:274.80px;top:579.40px;font-family:"Liberation Serif", serif;font-size:23.33px;font-weight:400;color:#000;white-space:nowrap;text-align:justify;text-align-last:justify;width:800px;'>elektronizacją (Dz.U. z 2018 r. poz. 357) informuję, że w terminie 7 dni od dnia</div>
<div class=t style='left:274.80px;top:605.70px;font-family:"Liberation Serif", serif;font-size:23.33px;font-weight:400;color:#000;'>otrzymania niniejszego dokumentu jest Pan(-i) zobowiązan(y/a) do:</div></div>
<svg class=a style='left:0;top:0' width='1248' height='672' viewBox='0 0 1248 672'><defs><filter id='sh' x='-20%' y='-20%' width='140%' height='140%'><feGaussianBlur in='SourceAlpha' stdDeviation='1.5'/><feOffset dx='2' dy='2'/><feComponentTransfer><feFuncA type='linear' slope='0.45'/></feComponentTransfer><feMerge><feMergeNode/><feMergeNode in='SourceGraphic'/></feMerge></filter></defs><g filter='url(#sh)'><rect x='66.5' y='289.5' width='189.5' height='40.5' fill='none' stroke='#ff0000' stroke-width='2'/><rect x='1074' y='331.5' width='78' height='95' fill='none' stroke='#ff0000' stroke-width='2'/><path d='M258,308.8 L1063,353.3' stroke='#ff0000' stroke-width='2'/><path d='M1073.5,354 L1062,350.2 L1061.8,357.6 Z' fill='#ff0000'/></g><rect x='1075' y='367' width='2.5' height='24.5' fill='#444'/><rect x='1106.5' y='372.5' width='12' height='8' fill='none' stroke='#000' stroke-width='1' stroke-dasharray='1 1' shape-rendering='crispEdges'/><path d='M1104.5,356.5 V370.5 L1108,367.2 L1110.6,373.6 L1112.6,372.8 L1110.2,366.5 L1114.8,366.5 Z' fill='#fff' stroke='#000' stroke-width='1.1'/><rect x='1114.5' y='376.5' width='10' height='9.5' fill='#fff' stroke='#000' stroke-width='1.1'/><path d='M1116.8,381.25 H1122.2 M1119.5,378.6 V384' stroke='#000' stroke-width='1.1'/><path d='M718.5,631.8 L720.25,629.9 L722.00,632.3 L723.75,629.9 L725.50,632.3 L727.25,629.9 L729.00,632.3 L730.75,629.9 L732.50,632.3 L734.25,629.9 L736.00,632.3 L737.75,629.9 L739.50,632.3 L741.25,629.9 L743.00,632.3 L744.75,629.9 L746.50,632.3 L748.25,629.9 L750.00,632.3 L751.75,629.9 L753.50,632.3 L755.25,629.9 L757.00,632.3 L758.75,629.9 L760.50,632.3 L762.25,629.9 L764.00,632.3 L765.75,629.9 L767.50,632.3 L769.25,629.9 L771.00,632.3 L772.75,629.9 L774.50,632.3 L776.25,629.9 L778.00,632.3 L779.75,629.9 L781.50,632.3 L783.25,629.9 L785.00,632.3 L786.75,629.9 L788.50,632.3 L790.25,629.9 L792.00,632.3 L793.75,629.9 L795.50,632.3 L797.25,629.9 L799.00,632.3 L800.75,629.9 L802.50,632.3 L804.25,629.9 L806.00,632.3 L807.75,629.9 L809.50,632.3 L811.25,629.9 L813.00,632.3 L814.75,629.9 L816.50,632.3 L818.25,629.9 L820.00,632.3 L821.75,629.9 L823.50,632.3 L825.25,629.9 L827.00,632.3 L828.75,629.9 L830.50,632.3' fill='none' stroke='#f01010' stroke-width='1.2'/></svg>
</body></html>
